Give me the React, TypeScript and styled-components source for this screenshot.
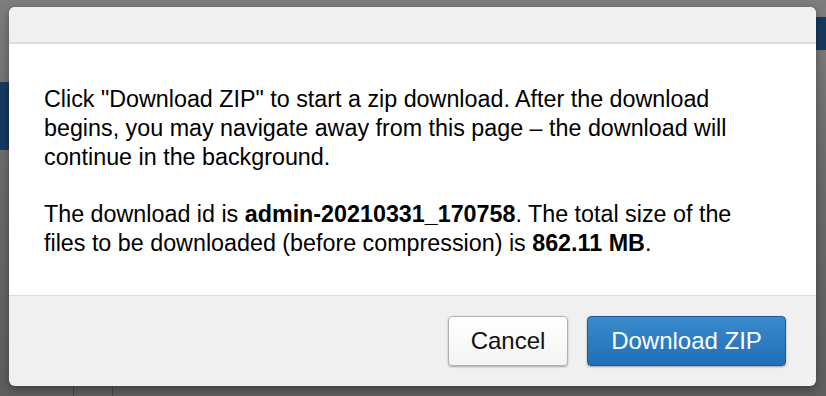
import React from "react";
import styled, { createGlobalStyle } from "styled-components";

const Global = createGlobalStyle`
  html, body { margin: 0; padding: 0; }
  body {
    width: 826px;
    height: 396px;
    overflow: hidden;
    font-family: "Liberation Sans", Arial, Helvetica, sans-serif;
  }
`;

const Backdrop = styled.div`
  position: relative;
  width: 826px;
  height: 396px;
  background: linear-gradient(180deg, #7d7d7d 0%, #6a6a6a 45%, #5e5e5e 100%);
  padding: 7px 10px 10px 9px;
  box-sizing: border-box;
  overflow: hidden;
`;

const PageStrip = styled.div<{ $top: number; $h: number; $side: "left" | "right" }>`
  position: absolute;
  top: ${(p) => p.$top}px;
  height: ${(p) => p.$h}px;
  ${(p) => (p.$side === "left" ? "left: 0;" : "right: 0;")}
  width: 10px;
  background: #163a5e;
`;

const PageDivider = styled.div<{ $left: number }>`
  position: absolute;
  bottom: 0;
  left: ${(p) => p.$left}px;
  width: 1px;
  height: 10px;
  background: #464646;
`;

const Modal = styled.div`
  position: relative;
  display: flex;
  flex-direction: column;
  height: 379px;
  background: #f0f0f0;
  border-radius: 6px;
  overflow: hidden;
  box-shadow: 0 3px 10px rgba(0, 0, 0, 0.35);
`;

const Header = styled.div`
  height: 35px;
  background: #f0f0f0;
  border-bottom: 2px solid #dddddd;
  flex: none;
`;

const Body = styled.div`
  background: #ffffff;
  padding: 41px 20px 0 35px;
  height: 252px;
  box-sizing: border-box;
  border-bottom: 1px solid #dddddd;
  flex: none;
`;

const Para = styled.p`
  margin: 0 0 28px 0;
  font-size: 23.3px;
  line-height: 29px;
  color: #000;
  white-space: nowrap;
`;

const Footer = styled.div`
  flex: 1;
  display: flex;
  justify-content: flex-end;
  align-items: flex-start;
  gap: 19px;
  padding: 20px 30px 0 0;
`;

const Button = styled.button<{ $primary?: boolean }>`
  height: 50px;
  padding: 0 20px;
  border-radius: 4px;
  font-family: "Liberation Sans", Arial, Helvetica, sans-serif;
  font-size: 24px;
  cursor: pointer;
  box-sizing: border-box;
  ${(p) =>
    p.$primary
      ? `
    background: linear-gradient(180deg, #3a8acd 0%, #1f6fb8 100%);
    color: #ffffff;
    border: 1px solid #1a5c99;
    min-width: 199px;
    box-shadow: 0 1px 2px rgba(0,0,0,0.35);
  `
      : `
    background: linear-gradient(180deg, #ffffff 0%, #f4f4f4 100%);
    color: #111111;
    border: 1px solid #b0b0b0;
    min-width: 120px;
    box-shadow: 0 1px 2px rgba(0,0,0,0.3);
  `}
`;

export default function App() {
  return (
    <>
      <Global />
      <Backdrop>
        <PageStrip $side="left" $top={82} $h={68} />
        <PageStrip $side="right" $top={17} $h={33} />
        <PageDivider $left={73} />
        <PageDivider $left={112} />
        <Modal>
          <Header />
          <Body>
            <Para>
              Click "Download ZIP" to start a zip download. After the download
              <br />
              begins, you may navigate away from this page – the download will
              <br />
              continue in the background.
            </Para>
            <Para>
              The download id is <b>admin-20210331_170758</b>. The total size of the
              <br />
              files to be downloaded (before compression) is <b>862.11 MB</b>.
            </Para>
          </Body>
          <Footer>
            <Button>Cancel</Button>
            <Button $primary>Download ZIP</Button>
          </Footer>
        </Modal>
      </Backdrop>
    </>
  );
}
